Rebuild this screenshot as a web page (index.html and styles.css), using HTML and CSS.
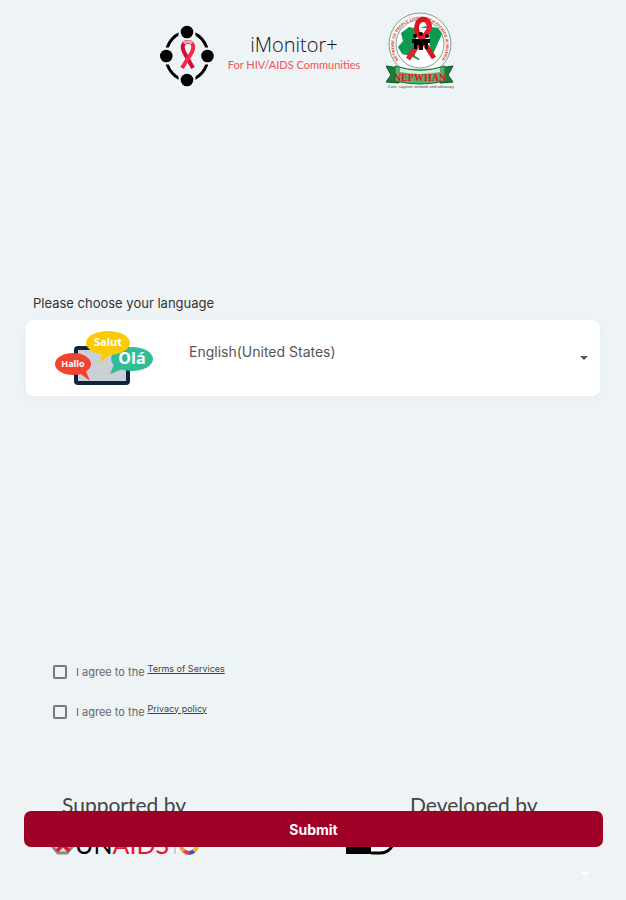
FILE: index.html
```
<!DOCTYPE html>
<html lang="en">
<head>
<meta charset="utf-8">
<meta name="viewport" content="width=device-width, initial-scale=1">
<title>iMonitor+</title>
<link rel="stylesheet" href="styles.css">
</head>
<body>
<form class="page">
  <header class="header">
    <svg class="mark" viewBox="0 0 54 62" aria-hidden="true">
      <ellipse cx="27" cy="31" rx="21" ry="24" fill="none" stroke="#000" stroke-width="3"/>
      <path d="M27 0V62M0 31H54" stroke="#eef3f6" stroke-width="17"/>
      <circle cx="27" cy="7" r="6.300"/><circle cx="27" cy="55" r="6.300"/>
      <circle cx="6.300" cy="31" r="6.300"/><circle cx="47.500" cy="31" r="6.300"/>
      <path d="M33 43 24 27C21 20 24 17 28 17" fill="none" stroke="#d80b38" stroke-width="4"/>
      <path d="M22 43 32 27C35 20 32 17 28 17" fill="none" stroke="#f32850" stroke-width="4"/>
      <path d="M24 18.500C26 16 30 16 32 18.500" fill="none" stroke="#f7a5b4" stroke-width="3"/>
    </svg>
    <div class="brand">
      <h1 class="brand-name">iMonitor+</h1>
      <p class="brand-tag">For HIV/AIDS Communities</p>
    </div>
    <svg class="seal" viewBox="0 0 72 78" role="img" aria-label="NEPWHAN">
      <defs><path id="ring" d="M17 53A26 26 0 1 1 51 53"/></defs>
      <circle cx="34" cy="32" r="31" fill="#f8f8f6" stroke="#71a886"/>
      <circle cx="34" cy="32" r="24" fill="#fff" stroke="#71a886"/>
      <text class="seal-ring"><textPath href="#ring" startOffset="50%">NETWORK OF PEOPLE LIVING WITH HIV/AIDS IN NIGERIA</textPath></text>
      <path d="M15 21 23 15 32 17 40 14 52 16 56 22 52 31 48 40 39 45 32 48 25 44 16 42 12 35 17 29Z" fill="#0b9a50"/>
      <path d="M31 16H43L44 42 35 48 29 44Z" fill="#fff"/>
      <path d="M48 46 31 20C28 7 41 3 43 13" fill="none" stroke="#d91520" stroke-width="5"/>
      <path d="M22 47 39 23C44 18 45 12 41 8" fill="none" stroke="#ed1c2a" stroke-width="5"/>
      <circle cx="29" cy="24" r="2"/><circle cx="35" cy="22" r="2"/><circle cx="41" cy="24" r="2"/>
      <path d="M26 27H44V31H42V37H39V33H37V38H33V33H31V37H28V31H26Z"/>
      <path d="M0 54 13 56V71L0 70 5 63ZM67 54 54 56V71L67 70 62 63Z" fill="#168039" stroke="#0a5024"/>
      <path d="M9 54Q34 62 59 54V69Q34 75 9 69Z" fill="#55af6b" stroke="#176c32"/>
      <path d="M14 56Q34 62 54 56V60Q34 64 14 60Z" fill="#d3ebd8"/>
      <text class="seal-name" x="34" y="69">NEPWHAN</text>
      <text class="seal-motto" x="35" y="76">Care, support, network and advocacy</text>
    </svg>
  </header>

  <section class="language">
    <label class="language-label" for="language">Please choose your language</label>
    <div class="card">
      <svg class="bubbles" viewBox="0 0 100 56" aria-hidden="true">
        <rect x="22" y="18" width="52" height="35" rx="2" fill="#cbd0d6" stroke="#10243d" stroke-width="4"/>
        <path d="M24 42 36 51 31 39Z" fill="#f04430"/>
        <ellipse cx="19" cy="34" rx="18" ry="11" fill="#f04430"/>
        <path d="M61 32 56 44 74 37Z" fill="#2fbd97"/>
        <ellipse cx="78" cy="29" rx="21" ry="12" fill="#2fbd97"/>
        <path d="M49 20 46 33 60 21Z" fill="#fbcb04"/>
        <ellipse cx="54" cy="13" rx="22" ry="12" fill="#fbcb04"/>
        <text class="bubble-text" x="19" y="37">Hallo</text>
        <text class="bubble-text bubble-mid" x="54" y="16">Salut</text>
        <text class="bubble-text bubble-big" x="78" y="34">Olá</text>
      </svg>
      <select class="select" id="language"><option>English(United States)</option></select>
      <svg class="caret" viewBox="0 0 8 4" aria-hidden="true"><path d="M0 0H8L4 4Z" fill="#555"/></svg>
    </div>
  </section>

  <section class="consents">
    <div class="consent"><input class="check" type="checkbox" id="terms"><label for="terms">I agree to the</label><a class="link" href="#terms">Terms of Services</a></div>
    <div class="consent"><input class="check" type="checkbox" id="privacy"><label for="privacy">I agree to the</label><a class="link" href="#privacy">Privacy policy</a></div>
  </section>

  <footer class="footer">
    <div class="partner">
      <p class="partner-title">Supported by</p>
      <svg class="partner-logo" viewBox="0 0 150 34" role="img" aria-label="UNAIDS">
        <path d="M3 25 8 31H17L22 25 20 15H6Z" fill="#ddd" stroke="#888" stroke-width="3"/>
        <path d="M7 29 18 17M19 29 8 17" stroke="#e3172d" stroke-width="4"/>
        <text class="unaids" x="25" y="32">UN<tspan fill="#e3172d">AIDS</tspan></text>
        <path d="M125 8V32" stroke="#aaa"/>
        <g fill="none" stroke-width="4"><path d="M131 23A8 8 0 0 0 134 29" stroke="#f59b23"/><path d="M134 29A8 8 0 0 0 139 31" stroke="#dc3c68"/><path d="M139 31A8 8 0 0 0 144 29" stroke="#3c5aa0"/><path d="M144 29A8 8 0 0 0 147 23" stroke="#f5ad22"/></g>
      </svg>
    </div>
    <div class="partner partner-dev">
      <p class="partner-title">Developed by</p>
      <svg class="partner-logo" viewBox="0 0 150 34" aria-hidden="true">
        <path d="M0 0H26V32H0Z"/><path d="M25 2H34C54 2 52 31 34 31H25" fill="#fff" stroke="#000" stroke-width="3"/>
      </svg>
    </div>
    <button class="submit" type="submit">Submit</button>
    <svg class="corner" viewBox="0 0 8 4" aria-hidden="true"><path d="M0 0H8L4 4Z" fill="#fff"/></svg>
  </footer>
</form>
</body>
</html>
```
FILE: styles.css
```
* { box-sizing: border-box; }
body {
  margin: 0;
  background: #eef3f6;
  color: #333;
  font-family: Inter, "Liberation Sans", sans-serif;
}
h1, p { margin: 0; }
.page {
  display: flex;
  flex-direction: column;
  min-height: 100vh;
}
.header {
  display: flex;
  justify-content: center;
  align-items: flex-start;
  padding: 12px 8px 0 0;
}
.mark { width: 54px; height: 62px; margin: 13px 14px 0 0; }
.brand {
  margin: 20px 26px 0 0;
  text-align: center;
}
.brand-name {
  font: 300 20px/26px "Open Sans", sans-serif;
  color: #111;
}
.brand-tag {
  font: 400 11px/14px Lato, sans-serif;
  color: #f45158;
}
.seal { width: 72px; height: 78px; }
.seal-ring { font: 700 4px "Liberation Sans", sans-serif; fill: #d9303a; text-anchor: middle; }
.seal-name { font: 700 10px "Liberation Serif", serif; fill: #e0141c; text-anchor: middle; }
.seal-motto { font: italic 4px "Liberation Sans", sans-serif; fill: #444; text-anchor: middle; }

.language { padding: 204px 26px 0; }
.language-label {
  display: block;
  padding: 0 7px 8px;
  font-size: 13px;
  line-height: 18px;
}
.card {
  display: flex;
  align-items: center;
  height: 76px;
  padding: 0 12px 0 28px;
  background: #fff;
  border-radius: 8px;
  box-shadow: 0 4px 12px #dfe3eb66;
}
.bubbles { width: 100px; height: 56px; margin-right: 35px; }
.bubble-text { font: 700 9px "Open Sans", sans-serif; fill: #fff; text-anchor: middle; }
.bubble-mid { font-size: 11px; }
.bubble-big { font-size: 16px; }
.select {
  flex: 1;
  align-self: stretch;
  min-width: 0;
  padding: 0 0 14px;
  border: 0;
  background: none;
  appearance: none;
  color: #555;
  font: 400 14px Inter, sans-serif;
}
.caret { width: 8px; height: 4px; }

.consents {
  display: grid;
  gap: 16px;
  padding: 264px 53px 0;
}
.consent {
  display: flex;
  align-items: center;
  height: 24px;
  color: #666;
  font-size: 11px;
}
.check {
  width: 14px;
  height: 14px;
  margin: 0 9px 0 0;
  appearance: none;
  border: 2px solid #777;
  border-radius: 2px;
}
.check:checked { background: #a10026; }
.link {
  margin: 0 0 8px 3px;
  color: #444;
  font-size: 9px;
}

.footer {
  position: relative;
  display: flex;
  justify-content: space-between;
  min-height: 106px;
  margin-top: auto;
  padding: 0 62px 0 50px;
}
.partner-title {
  padding-left: 12px;
  font: 400 21px/22px Lato, sans-serif;
  color: #444;
}
.partner-logo { display: block; width: 150px; height: 34px; margin-top: 6px; }
.partner-dev { width: 218px; }
.partner-dev .partner-title { padding-left: 64px; white-space: nowrap; }
.unaids { font: 400 25px Lato, sans-serif; stroke-width: 1px; }
.submit {
  position: absolute;
  top: 17px;
  right: 23px;
  left: 24px;
  height: 36px;
  border: 0;
  border-radius: 7px;
  background: #a10026;
  color: #fff;
  font: 700 14px Inter, sans-serif;
}
.corner {
  position: absolute;
  right: 37px;
  bottom: 24px;
  width: 8px;
  height: 4px;
}
```
